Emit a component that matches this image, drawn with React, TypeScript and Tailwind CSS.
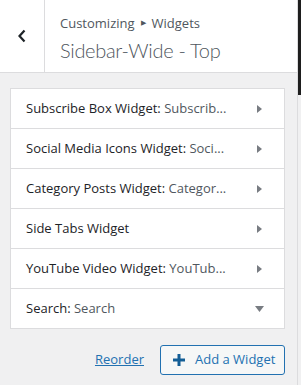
import React from 'react';

const widgets = [
  { title: 'Subscribe Box Widget', sub: 'Subscrib...' },
  { title: 'Social Media Icons Widget', sub: 'Soci...' },
  { title: 'Category Posts Widget', sub: 'Categor...' },
  { title: 'Side Tabs Widget', sub: '' },
  { title: 'YouTube Video Widget', sub: 'YouTub...' },
  { title: 'Search', sub: 'Search', open: true },
];

export default function App() {
  return (
    <div
      className="w-[301px] h-[385px] flex overflow-hidden bg-[#f0f0f1] text-[#1d2327]"
      style={{ fontFamily: '"Open Sans", "Noto Sans", sans-serif' }}
    >
      <div className="w-[297px] flex flex-col">
        {/* HEADER */}
        <div className="h-[73px] flex bg-white border-b border-[#dcdcde]">
          <button className="w-[45px] border-r border-[#dcdcde] flex items-center justify-center">
            <svg width="10" height="14" viewBox="0 0 10 14">
              <path d="M7.5 1.5 L2.5 7 L7.5 12.5" fill="none" stroke="#1d2327" strokeWidth="2.2" />
            </svg>
          </button>
          <div className="pl-[15px] pt-[13px] text-[#50575e]">
            <div className="text-[13px] leading-[20px] flex items-center gap-[6px]">
              <span>Customizing</span>
              <span className="text-[7px]">▶</span>
              <span>Widgets</span>
            </div>
            <div className="font-['Lato',sans-serif] text-[20px] leading-[28px] font-light tracking-[-0.3px] mt-[3px]">
              Sidebar-Wide - Top
            </div>
          </div>
        </div>

        {/* WIDGET LIST */}
        <div className="mt-[15px] ml-[10px] mr-[12px] bg-white border-x border-b border-[#dcdcde]">
          {widgets.map((w) => (
            <div
              key={w.title}
              className="h-[40px] flex items-center pl-[15px] pr-[20px] text-[13px] border-t border-[#dcdcde]"
            >
              <span className="flex-1 whitespace-nowrap">
                {w.title}
                {w.sub && (
                  <>
                    : <span className="text-[#50575e]">{w.sub}</span>
                  </>
                )}
              </span>
              {w.open ? (
                <svg width="9" height="6" viewBox="0 0 9 6">
                  <path d="M0 0 H9 L4.5 6 Z" fill="#787c82" />
                </svg>
              ) : (
                <svg width="5" height="8" viewBox="0 0 5 8" className="mr-[2px]">
                  <path d="M0 0 L5 4 L0 8 Z" fill="#787c82" />
                </svg>
              )}
            </div>
          ))}
        </div>

        {/* FOOTER */}
        <div className="mt-[16px] mr-[12px] flex items-center justify-end gap-[16px]">
          <a href="#" className="text-[13px] text-[#2271b1] underline">Reorder</a>
          <button className="h-[30px] w-[125px] flex items-center gap-[10px] pl-[12px] border border-[#2271b1] rounded-[3px] bg-[#f6f7f7] text-[#2271b1] text-[13px]">
            <svg width="12" height="12" viewBox="0 0 12 12">
              <path d="M6 0 V12 M0 6 H12" stroke="#135e96" strokeWidth="3" />
            </svg>
            Add a Widget
          </button>
        </div>
      </div>

      {/* SCROLLBAR */}
      <div className="w-[4px] border-l border-[#dcdcde]">
        <div className="h-[95px] bg-[#1e1e1e]" />
      </div>
    </div>
  );
}
